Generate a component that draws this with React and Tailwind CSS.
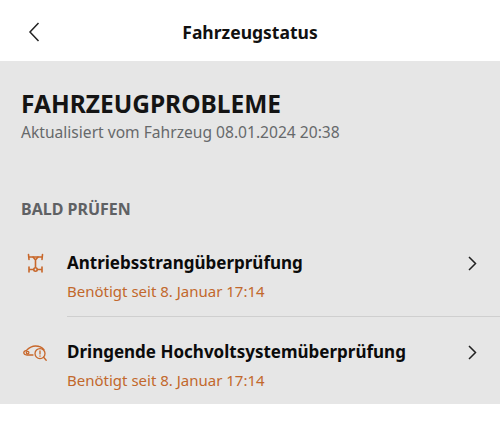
import React from 'react';

function DriveIcon() {
    return (
        <svg width="17" height="20" viewBox="0 0 17 20" fill="none" stroke="#c8672a" strokeWidth="1.6" strokeLinecap="round">
            <path d="M2 4h13M1.5 1.5l.5 5M15.5 1.5l-.5 5" />
            <path d="M6 4l2.5 3 2.5-3M8.5 7v7" />
            <path d="M2 16.5h13M2 14v5M15 14v5" />
            <circle cx="8.5" cy="16.5" r="1.7" fill="#e6e6e6" />
        </svg>
    );
}

function HvIcon() {
    return (
        <svg width="25" height="16" viewBox="0 0 25 16" fill="none" stroke="#c8672a" strokeWidth="1.3" strokeLinecap="round">
            <path d="M10 10H4C2 10 .8 9 .8 7.6.8 6.2 2 5.6 3.6 5.3 6.2 2.6 9 1 12.5 1c3.5 0 6.5 1.2 8.5 3.6" />
            <circle cx="4.6" cy="7.6" r="1.3" />
            <circle cx="17" cy="8.6" r="5" />
            <path d="M20.6 12.3l2.6 3M17 5.9v3M17 11v.2" />
        </svg>
    );
}

function Chevron({ dir }) {
    if (dir === 'left') {
        return (
            <svg width="12" height="20" viewBox="0 0 12 20" fill="none" stroke="#222222" strokeWidth="1.5">
                <path d="M10.5 1L2 10l8.5 9" />
            </svg>
        );
    }
    return (
        <svg width="9" height="15" viewBox="0 0 9 15" fill="none" stroke="#222222" strokeWidth="1.5">
            <path d="M1 1l6.5 6.5L1 14" />
        </svg>
    );
}

function Row({ icon, title, divider, iconPad }) {
    return (
        <div className="flex">
            <div className={`w-[67px] flex justify-center pl-[3px] ${iconPad}`}>{icon}</div>
            <div className={`flex-1 pt-[23px] pb-[13px] ${divider ? 'border-b border-[#cfcfcf]' : ''}`}>
                <div className="flex items-center justify-between pr-[23px]">
                    <div className="text-[17px] leading-[24px] font-bold text-[#0b0b0b]">{title}</div>
                    <Chevron dir="right" />
                </div>
                <div className="mt-[4px] text-[15px] leading-[24px] text-[#c2682c]">Benötigt seit 8. Januar 17:14</div>
            </div>
        </div>
    );
}

export default function App() {
    return (
        <div className="w-[500px] h-[426px] bg-white font-['Noto_Sans',sans-serif] overflow-hidden">
            <header className="h-[61px] flex items-center relative justify-center pt-[3px]">
                <div className="absolute left-[28px] top-[22px]"><Chevron dir="left" /></div>
                <h1 className="text-[17.5px] font-bold text-[#111111]">Fahrzeugstatus</h1>
            </header>
            <main className="bg-[#e6e6e6] h-[343px] pt-[28px]">
                <div className="px-[21px]">
                    <h2 className="text-[24.5px] leading-[30px] font-bold text-[#141414]">FAHRZEUGPROBLEME</h2>
                    <p className="text-[15.6px] leading-[24px] mt-[1px] text-[#66696b]">Aktualisiert vom Fahrzeug 08.01.2024 20:38</p>
                    <h3 className="mt-[55px] text-[16px] leading-[20px] font-bold text-[#5f6164]">BALD PRÜFEN</h3>
                </div>
                <div className="mt-[9px]">
                    <Row icon={<DriveIcon />} title="Antriebsstrangüberprüfung" divider iconPad="pt-[25px]" />
                    <Row icon={<HvIcon />} title="Dringende Hochvoltsystemüberprüfung" iconPad="pt-[28px]" />
                </div>
            </main>
        </div>
    );
}
